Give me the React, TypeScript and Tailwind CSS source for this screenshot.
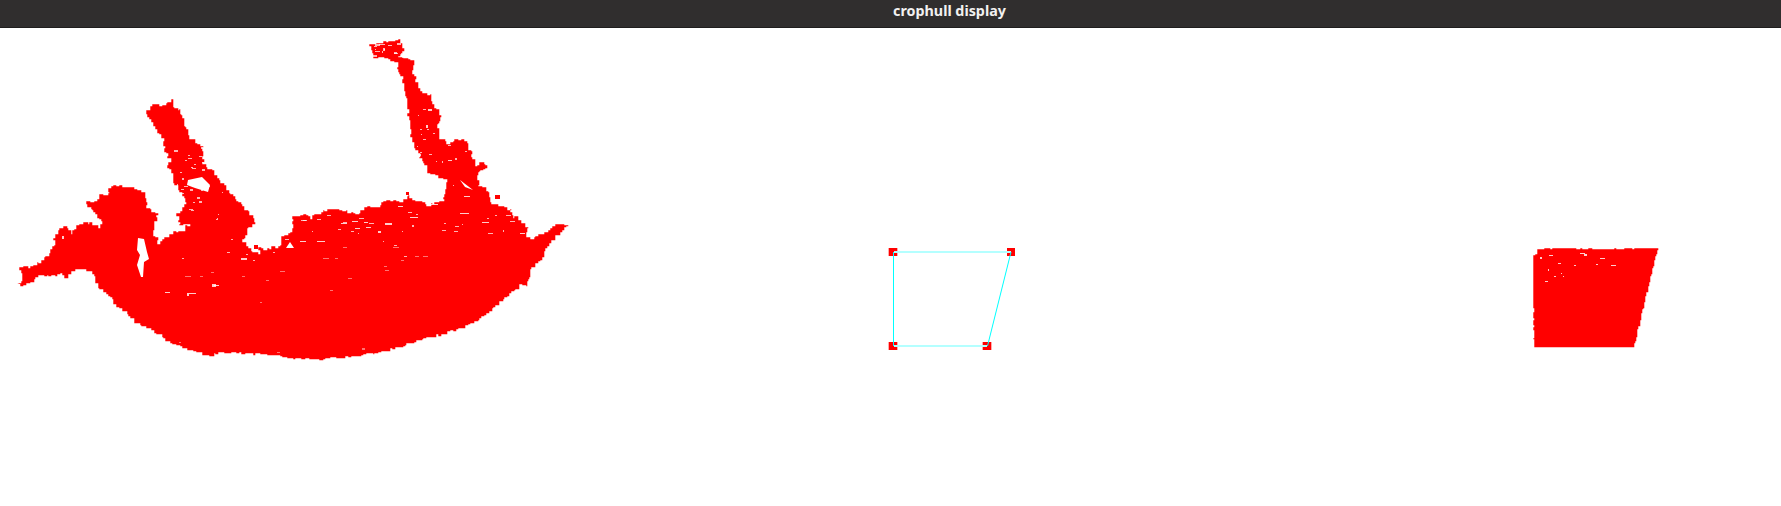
type Pt = [number, number];
type Box = [number, number, number, number];

const outline: Pt[] = [
  [18,282],[23,277],[19,267],[23,265],[28,267],[42,260],[48,254],[55,242],[53,237],[60,228],[67,227],[70,233],[78,223],[90,223],[98,227],[102,222],[92,208],[86,202],[95,200],[100,193],[107,197],[108,188],[117,185],[128,187],[143,193],[147,208],[157,215],[153,232],[158,243],[170,233],[182,230],[190,223],[180,225],[177,213],[185,203],[185,198],[180,190],[172,178],[173,173],[168,165],[170,158],[165,152],[163,138],[157,130],[152,120],[144,113],[153,104],[163,105],[170,100],[175,103],[172,108],[180,110],[187,133],[190,138],[202,148],[203,165],[213,173],[225,188],[243,207],[257,223],[248,228],[243,243],[252,253],[260,253],[258,247],[263,250],[280,245],[282,237],[293,230],[292,215],[303,215],[310,218],[317,213],[330,208],[348,212],[355,215],[368,205],[380,208],[380,202],[390,200],[400,203],[408,194],[412,200],[427,205],[443,200],[445,193],[447,180],[430,172],[422,158],[413,143],[410,127],[407,107],[405,90],[402,77],[397,63],[387,58],[373,57],[372,50],[370,44],[383,42],[398,39],[403,50],[397,58],[405,57],[413,62],[413,73],[420,92],[430,95],[433,108],[442,117],[437,127],[440,138],[447,143],[458,139],[467,143],[475,165],[482,162],[488,168],[478,172],[478,187],[485,188],[492,203],[510,210],[512,218],[517,215],[518,220],[527,228],[527,238],[533,238],[547,230],[558,223],[568,225],[547,248],[542,260],[532,268],[528,285],[523,285],[513,292],[487,315],[470,325],[447,333],[413,343],[390,350],[363,355],[320,359],[293,358],[277,355],[247,353],[227,353],[207,355],[193,350],[173,343],[153,330],[137,322],[127,312],[113,303],[110,295],[100,288],[92,272],[80,268],[67,277],[62,273],[52,277],[43,275],[35,278],[33,283],[23,286],
];
const crop: Pt[] = [[1537,249],[1560,248],[1598,249],[1658,248],[1650,280],[1634,347],[1534,347],[1533,300],[1533,255],[1537,254]];
const holes: Pt[][] = [
  [[138,238],[144,239],[147,252],[149,259],[144,262],[143,277],[141,277],[137,265],[140,255],[137,250]],
  [[188,180],[202,177],[210,185],[208,192],[195,188],[187,185]],
  [[286,248],[290,242],[294,248]],
  [[460,180],[473,190],[465,187]],
];
const streaks: Box[] = [
  [199,182,4,3],[241,258,6,2],[317,241,8,1],[300,241,6,1],[341,223,6,1],[352,221,6,1],[355,228,5,1],[364,222,4,1],[366,227,5,1],[385,223,7,2],[378,231,3,2],[410,217,8,1],[398,206,5,1],[430,204,8,1],[460,213,9,1],[482,222,7,1],[520,233,5,1],[187,293,2,3],[189,293,7,1],[165,292,5,1],[212,284,4,3],[214,285,5,1],[62,236,2,3],[428,109,4,2],[426,125,2,3],[448,160,4,1],[464,196,6,1],
];
const faint: Box[] = [
  [343,247,4,1],[323,258,6,1],[393,247,6,1],[335,258,3,1],[415,256,4,1],[423,256,5,1],[401,260,3,1],[384,266,3,1],[385,270,4,1],[185,276,6,1],[200,276,3,1],[211,272,3,1],[242,276,3,1],[266,280,3,1],[280,271,5,1],[348,278,4,1],[330,290,3,1],[260,302,2,1],[362,348,3,2],[277,352,3,1],[179,342,2,1],
];
const dots: Box[] = [[61,247,3,3],[254,245,4,4],[495,195,5,4],[451,192,4,3],[406,192,3,3],[410,204,3,2]];
const cropSpecks: Box[] = [[1549,255,4,1],[1540,257,2,2],[1580,253,5,1],[1584,254,3,2],[1600,258,5,1],[1558,263,3,1],[1574,265,2,1],[1596,264,2,1],[1611,265,5,1],[1548,269,1,2],[1561,273,1,1],[1554,276,2,1],[1563,276,1,1],[1545,281,3,1]];

function rng(seed: number) {
  let s = seed;
  return () => {
    s = (s * 1664525 + 1013904223) % 4294967296;
    return s / 4294967296;
  };
}

function pixelate(pts: Pt[], step: number, amp: number, seed: number): string {
  const r = rng(seed);
  const out: Pt[] = [];
  let prev: Pt | null = null;
  pts.forEach((a, i) => {
    const b = pts[(i + 1) % pts.length];
    const len = Math.hypot(b[0] - a[0], b[1] - a[1]);
    const n = Math.max(1, Math.round(len / step));
    for (let k = 0; k < n; k++) {
      const t = k / n;
      const x = Math.round(a[0] + (b[0] - a[0]) * t + (r() - 0.5) * amp) + 0.3;
      const y = Math.round(a[1] + (b[1] - a[1]) * t + (r() - 0.5) * amp) + 0.3;
      if (prev) out.push([x, prev[1]]);
      out.push([x, y]);
      prev = [x, y];
    }
  });
  return out.map((p) => p.join(",")).join(" ");
}

function specks(region: Box, count: number, seed: number, maxW: number): Box[] {
  const r = rng(seed);
  const res: Box[] = [];
  for (let i = 0; i < count; i++) {
    res.push([
      Math.round(region[0] + r() * region[2]),
      Math.round(region[1] + r() * region[3]),
      1 + Math.round(r() * maxW),
      r() > 0.8 ? 2 : 1,
    ]);
  }
  return res;
}

const outlineJag = pixelate(outline, 3, 2.4, 7);
const cropJag = pixelate(crop, 2, 0.8, 11);
const generated: Box[] = [
  ...specks([172, 145, 50, 75], 34, 3, 3),
  ...specks([412, 100, 60, 95], 30, 5, 2),
  ...specks([372, 42, 30, 16], 16, 9, 5),
  ...specks([290, 212, 220, 22], 26, 13, 4),
  ...specks([180, 235, 300, 30], 12, 17, 3),
];
const P = (pts: Pt[]) => pts.map((p) => p.join(",")).join(" ");

function Rects({ items, opacity }: { items: Box[]; opacity: number }) {
  return (
    <>
      {items.map(([x, y, w, h], i) => (
        <rect key={i} x={x} y={y} width={w} height={h} fill="#ffffff" opacity={opacity} />
      ))}
    </>
  );
}

export default function App() {
  return (
    <div className="relative h-[506px] w-[1781px] overflow-hidden bg-white">
      <div className="flex h-[28px] items-center justify-center border-b border-[#1f1e1e] bg-[#302e2e] pb-[4px] pl-[118px]">
        <span className="font-['Noto_Sans','Open_Sans',sans-serif] text-[14.3px] font-bold leading-none text-[#f2f1f0]">
          crophull display
        </span>
      </div>
      <svg className="absolute left-0 top-0 block" width={1781} height={506} viewBox="0 0 1781 506">
        <polygon points={outlineJag} fill="#ff0000" />
        {holes.map((h, i) => (
          <polygon key={i} points={P(h)} fill="#ffffff" />
        ))}
        <Rects items={generated} opacity={0.7} />
        <Rects items={streaks} opacity={0.8} />
        <Rects items={faint} opacity={0.45} />
        {dots.map(([x, y, w, h], i) => (
          <rect key={i} x={x} y={y} width={w} height={h} fill="#ff0000" />
        ))}
        <rect x={888.67} y={248} width={8.66} height={8} fill="#ff0000" />
        <rect x={1007} y={248} width={8} height={8} fill="#ff0000" />
        <rect x={888.67} y={342} width={8.66} height={8} fill="#ff0000" />
        <rect x={982.67} y={342} width={8.66} height={8} fill="#ff0000" />
        <line x1={893.5} y1={252} x2={893.5} y2={346} stroke="#00ffff" strokeWidth={1} />
        <line x1={894} y1={252} x2={1011} y2={252} stroke="#b4ffff" strokeWidth={2} />
        <line x1={894} y1={346} x2={987} y2={346} stroke="#b4ffff" strokeWidth={2} />
        <line x1={1011} y1={252} x2={987.5} y2={346} stroke="#00ffff" strokeWidth={1} />
        <polygon points={cropJag} fill="#ff0000" />
        <Rects items={cropSpecks} opacity={0.8} />
      </svg>
    </div>
  );
}
